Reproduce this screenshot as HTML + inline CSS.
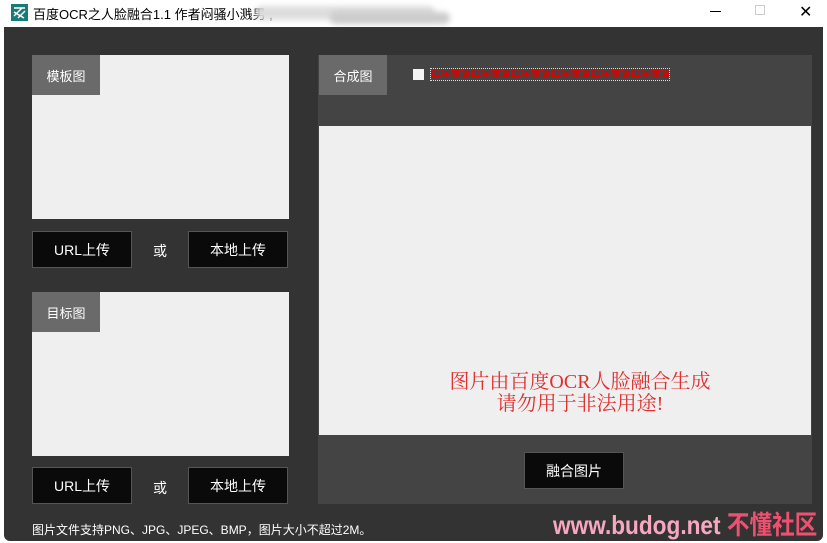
<!DOCTYPE html><html><head><meta charset="utf-8"><style>
*{margin:0;padding:0;box-sizing:border-box}
body{width:827px;height:543px;background:#fff;position:relative;overflow:hidden;font-family:"Liberation Sans","Noto Sans CJK SC",sans-serif}
.a{position:absolute}
.title{left:33px;top:4px;font-size:13px;color:#000}
.win{left:4px;top:27px;width:819px;height:514px;background:#333;border-radius:0 0 6px 6px}
.img{background:#efefef}
.lab{background:#6a6a6a;color:#fff;font-size:13px;display:flex;align-items:center;justify-content:center}
.btn{background:#0a0a0a;border:1px solid #555;color:#fff;font-size:14px;display:flex;align-items:center;justify-content:center}
.or{color:#fff;font-size:14px}
</style></head><body>
<svg class="a" style="left:11px;top:4px" width="17" height="17"><rect width="17" height="17" fill="#1a7a7a"/><path d="M3 4h11M3 8l10 6M3 12l8-8M7 14l7-7" stroke="#fff" stroke-width="1.5" fill="none"/></svg>
<div class="a title">百度OCR之人脸融合1.1 作者闷骚小溅男 ,</div>
<div class="a" style="left:255px;top:6px;width:180px;height:14px;background:#ddd;border-radius:7px;filter:blur(3px)"></div>
<div class="a" style="left:330px;top:12px;width:120px;height:12px;background:#ccc;border-radius:6px;filter:blur(3px)"></div>
<div class="a" style="left:710px;top:11px;width:11px;height:1px;background:#000"></div>
<div class="a" style="left:755px;top:5px;width:10px;height:10px;border:1px solid #ccc"></div>
<div class="a" style="left:799px;top:2px;font-size:16px;color:#000">✕</div>
<div class="a win"></div>
<div class="a img" style="left:32px;top:55px;width:257px;height:164px"></div>
<div class="a lab" style="left:32px;top:55px;width:68px;height:40px">模板图</div>
<div class="a btn" style="left:32px;top:231px;width:100px;height:37px">URL上传</div>
<div class="a or" style="left:153px;top:241px">或</div>
<div class="a btn" style="left:188px;top:231px;width:100px;height:37px">本地上传</div>
<div class="a img" style="left:32px;top:292px;width:257px;height:164px"></div>
<div class="a lab" style="left:32px;top:292px;width:68px;height:40px">目标图</div>
<div class="a btn" style="left:32px;top:467px;width:100px;height:37px">URL上传</div>
<div class="a or" style="left:153px;top:478px">或</div>
<div class="a btn" style="left:188px;top:467px;width:100px;height:37px">本地上传</div>
<div class="a" style="left:318px;top:55px;width:494px;height:449px;background:#444"></div>
<div class="a lab" style="left:319px;top:55px;width:68px;height:40px">合成图</div>
<div class="a" style="left:413px;top:69px;width:11px;height:11px;background:#f4f4f4"></div>
<div class="a" style="left:430px;top:68px;width:240px;height:13px;border:1px dotted #ddd;color:#d00;font-size:10px;line-height:11px;overflow:hidden;white-space:nowrap;font-weight:bold">红字重复红字重复红字重复红字重复红字重复红字重复</div>
<div class="a img" style="left:319px;top:126px;width:492px;height:309px"></div>
<div class="a" style="left:334px;top:371px;width:492px;text-align:center;color:#e03030;font-size:20px;line-height:22px;font-family:'Liberation Serif','Noto Serif CJK SC',serif">图片由百度OCR人脸融合生成<br>请勿用于非法用途!</div>
<div class="a btn" style="left:524px;top:452px;width:100px;height:37px">融合图片</div>
<div class="a" style="left:32px;top:521px;color:#fff;font-size:12px">图片文件支持PNG、JPG、JPEG、BMP，图片大小不超过2M。</div>
<div class="a" style="left:553px;top:505px;color:#f7a8c0;font-size:26px;font-weight:bold;white-space:nowrap;transform:scaleX(0.87);transform-origin:left top">www.budog.net <span style="color:#f05070">不懂社区</span></div>
</body></html>
